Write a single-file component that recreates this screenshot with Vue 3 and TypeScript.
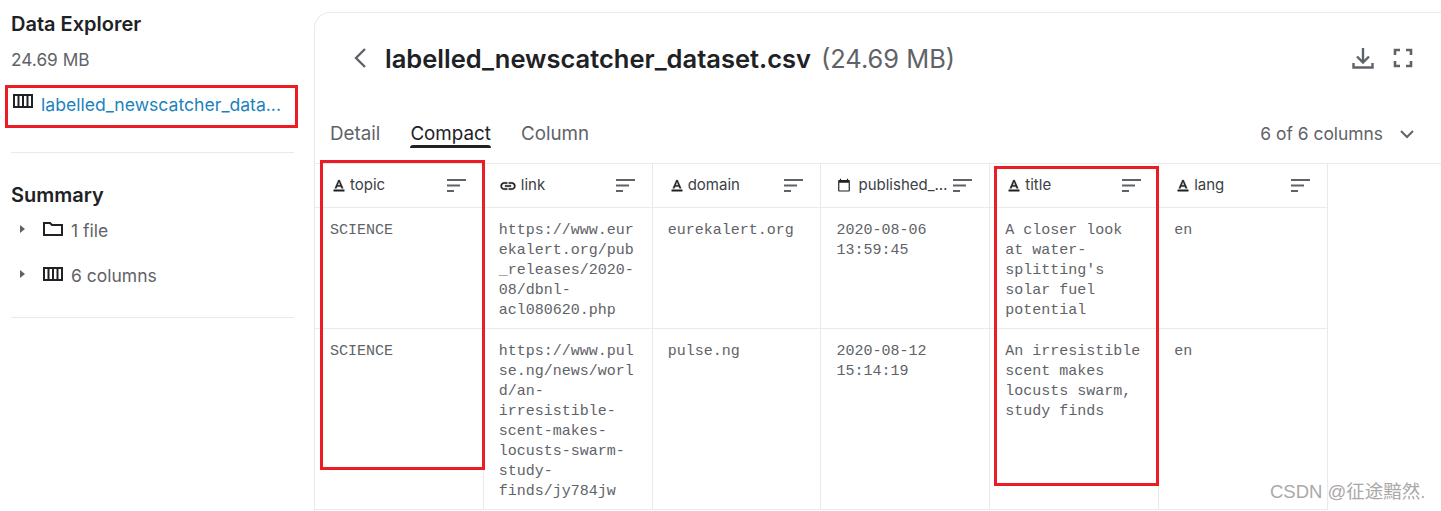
<script setup lang="ts">
interface Column {
  name: string
  icon: 'text' | 'link' | 'date'
}

const columns: Column[] = [
  { name: 'topic', icon: 'text' },
  { name: 'link', icon: 'link' },
  { name: 'domain', icon: 'text' },
  { name: 'published_date', icon: 'date' },
  { name: 'title', icon: 'text' },
  { name: 'lang', icon: 'text' }
]

const rows: string[][] = [
  [
    'SCIENCE',
    'https://www.eur\nekalert.org/pub\n_releases/2020-\n08/dbnl-\nacl080620.php',
    'eurekalert.org',
    '2020-08-06\n13:59:45',
    'A closer look\nat water-\nsplitting\'s\nsolar fuel\npotential',
    'en'
  ],
  [
    'SCIENCE',
    'https://www.pul\nse.ng/news/worl\nd/an-\nirresistible-\nscent-makes-\nlocusts-swarm-\nstudy-\nfinds/jy784jw',
    'pulse.ng',
    '2020-08-12\n15:14:19',
    'An irresistible\nscent makes\nlocusts swarm,\nstudy finds',
    'en'
  ]
]

const tabs = ['Detail', 'Compact', 'Column']
</script>

<template>
  <div class="page">
    <aside class="sidebar">
      <h2 class="side-title">Data Explorer</h2>
      <div class="side-size">24.69 MB</div>
      <div class="side-file">
        <svg class="cols-icon" width="20" height="16" viewBox="0 0 20 16">
          <path d="M1 2h18v12H1zM5.500 2v12M10 2v12M14.500 2v12" fill="none" stroke="#202124" stroke-width="2" />
        </svg>
        <span class="side-link">labelled_newscatcher_data...</span>
      </div>
      <hr class="side-rule" />
      <h2 class="side-title summary">Summary</h2>
      <div class="tree-row">
        <span class="tri"></span>
        <svg width="20" height="16" viewBox="0 0 20 16">
          <path d="M1 14V2h6l2 2h10v10z" fill="none" stroke="#202124" stroke-width="2" />
        </svg>
        <span>1 file</span>
      </div>
      <div class="tree-row second">
        <span class="tri"></span>
        <svg width="20" height="16" viewBox="0 0 20 16">
          <path d="M1 2h18v12H1zM5.500 2v12M10 2v12M14.500 2v12" fill="none" stroke="#202124" stroke-width="2" />
        </svg>
        <span>6 columns</span>
      </div>
      <hr class="side-rule lower" />
    </aside>

    <main class="panel">
      <header class="panel-head">
        <svg class="back" width="16" height="24" viewBox="0 0 16 24">
          <path d="M13 3 4 12l9 9" fill="none" stroke="#5f6368" stroke-width="2.400" />
        </svg>
        <h1 class="file-name">labelled_newscatcher_dataset.csv</h1>
        <span class="file-size">(24.69 MB)</span>
        <div class="head-actions">
          <svg width="24" height="24" viewBox="0 0 24 24">
            <path d="M12 2v14M6 10.500l6 6 6-6M2.500 17v4.500h19V17" fill="none" stroke="#5f6368" stroke-width="2.400" />
          </svg>
          <svg width="24" height="24" viewBox="0 0 24 24">
            <path d="M4 9V4h5M15 4h5v5M20 15v5h-5M9 20H4v-5" fill="none" stroke="#5f6368" stroke-width="2.600" />
          </svg>
        </div>
      </header>

      <nav class="tabs">
        <span v-for="tab in tabs" :key="tab" class="tab" :class="{ active: tab === 'Compact' }">{{ tab }}</span>
        <div class="col-count">
          <span>6 of 6 columns</span>
          <svg width="16" height="10" viewBox="0 0 16 10">
            <path d="m2 2 6 6 6-6" fill="none" stroke="#5f6368" stroke-width="2" />
          </svg>
        </div>
      </nav>

      <div class="table">
        <div v-for="col in columns" :key="col.name" class="th">
          <svg v-if="col.icon === 'text'" class="type-icon" width="18" height="18" viewBox="0 0 24 24">
            <path d="M5 17v2h14v-2H5zm4.500-4.200h5l.9 2.200h2.100L12.750 4h-1.500L6.500 15h2.100l.9-2.200zM12 5.980 13.870 11h-3.740L12 5.980z" fill="#202124" stroke="#202124" stroke-width=".6" />
          </svg>
          <svg v-else-if="col.icon === 'link'" class="type-icon link" width="18" height="18" viewBox="0 0 24 24">
            <path d="M3.900 12c0-1.710 1.390-3.100 3.100-3.100h4V7H7c-2.760 0-5 2.240-5 5s2.240 5 5 5h4v-1.900H7c-1.710 0-3.100-1.390-3.100-3.100zM8 13h8v-2H8v2zm9-6h-4v1.900h4c1.710 0 3.100 1.390 3.100 3.100s-1.390 3.100-3.100 3.100h-4V17h4c2.760 0 5-2.240 5-5s-2.240-5-5-5z" fill="#202124" stroke="#202124" stroke-width=".4" />
          </svg>
          <svg v-else class="type-icon date" width="14" height="16" viewBox="0 0 24 27">
            <path d="M20 3h-1V1h-2v2H7V1H5v2H4c-1.100 0-2 .9-2 2v16c0 1.100.9 2 2 2h16c1.100 0 2-.9 2-2V5c0-1.100-.9-2-2-2zm0 18H4V8h16v13z" fill="#202124" />
          </svg>
          <span class="th-name">{{ col.name }}</span>
          <svg class="sort-icon" width="19" height="13" viewBox="0 0 19 13">
            <path d="M0 0h19v2H0zM0 5.500h13v2H0zM0 11h7v2H0z" fill="#5f6368" />
          </svg>
        </div>
        <template v-for="(row, i) in rows" :key="i">
          <div v-for="(cell, j) in row" :key="j" class="td" :class="i === 0 ? 'first' : 'second'">{{ cell }}</div>
        </template>
      </div>
    </main>

    <div class="mark mark-file"></div>
    <div class="mark mark-topic"></div>
    <div class="mark mark-title"></div>
    <div class="watermark">CSDN @征途黯然.</div>
  </div>
</template>

<style>
html,
body {
  margin: 0;
  background: #fff;
  overflow: hidden;
}
</style>

<style scoped>
.page {
  position: relative;
  display: flex;
  width: 1441px;
  height: 511px;
  overflow: hidden;
  font-family: Inter, "Noto Sans", sans-serif;
  color: #5f6368;
  background: #fff;
}

.sidebar {
  flex: 0 0 314px;
  box-sizing: border-box;
  padding: 13px 20px 0 11px;
}

.side-title {
  margin: 0;
  font-size: 20px;
  line-height: 22px;
  font-weight: 600;
  color: #202124;
}

.side-size {
  margin-top: 13px;
  font-size: 17.300px;
  line-height: 24px;
}

.side-file {
  display: flex;
  align-items: flex-start;
  gap: 8px;
  margin-top: 20px;
  height: 60px;
  padding-left: 2px;
}

.cols-icon {
  margin-top: 1px;
}

.side-link {
  font-size: 17.600px;
  line-height: 24px;
  margin-top: 1px;
  color: #1a83bd;
}

.side-rule {
  margin: 0;
  border: 0;
  border-top: 1px solid #e8eaed;
  width: 283px;
}

.side-rule.lower {
  margin-top: 30px;
}

.summary {
  margin-top: 31px;
}

.tree-row {
  display: flex;
  align-items: center;
  height: 24px;
  margin-top: 12px;
  font-size: 17.500px;
  color: #5f6368;
}

.tree-row.second {
  margin-top: 21px;
}

.tree-row svg {
  margin: -3px 8px 0 18px;
}

.tri {
  width: 0;
  height: 0;
  margin: -3px 0 0 9px;
  border-top: 4.500px solid transparent;
  border-bottom: 4.500px solid transparent;
  border-left: 5px solid #5f6368;
}

.panel {
  flex: 1;
  margin-top: 12px;
  border-left: 1px solid #e8eaed;
  border-top: 1px solid #e8eaed;
  border-top-left-radius: 16px;
  min-width: 0;
}

.panel-head {
  display: flex;
  align-items: center;
  height: 92px;
  box-sizing: border-box;
  padding: 0 26px 2px 37px;
}

.back {
  margin: 0 17px 0 0;
}

.file-name {
  margin: 0;
  font-size: 25.500px;
  font-weight: 600;
  color: #202124;
}

.file-size {
  margin-left: 10px;
  font-size: 25.400px;
  color: #5f6368;
}

.head-actions {
  display: flex;
  gap: 16px;
  margin-left: auto;
}

.tabs {
  display: flex;
  align-items: flex-start;
  gap: 30px;
  height: 59px;
  box-sizing: border-box;
  padding: 16px 26px 0 15px;
  border-bottom: 1px solid #e8eaed;
}

.tab {
  position: relative;
  font-size: 18.800px;
  line-height: 26px;
  color: #5f6368;
}

.tab.active {
  color: #202124;
}

.tab.active::after {
  content: "";
  position: absolute;
  left: 0;
  right: 0;
  top: 24px;
  height: 3px;
  border-radius: 3px 3px 0 0;
  background: #202124;
}

.col-count {
  display: flex;
  align-items: center;
  gap: 16px;
  margin-left: auto;
  font-size: 17.400px;
  line-height: 26px;
}

.table {
  display: grid;
  grid-template-columns: repeat(6, 168.830px);
  color: #5f6368;
}

.th {
  display: flex;
  align-items: center;
  box-sizing: border-box;
  height: 44px;
  padding: 0 17px 0 15px;
  border-right: 1px solid #e8eaed;
  border-bottom: 1px solid #e8eaed;
}

.type-icon {
  flex: none;
  margin-right: 2px;
}

.type-icon.link {
  margin-right: 4px;
}

.type-icon.date {
  margin: 0 7px 0 1px;
}

.th-name {
  flex: 1;
  min-width: 0;
  overflow: hidden;
  white-space: nowrap;
  text-overflow: ellipsis;
  font-size: 15px;
  line-height: 20px;
  margin-top: -2px;
  color: #3c4043;
}

.sort-icon {
  flex: none;
  margin: -1px 0 0 5px;
}

.td {
  box-sizing: border-box;
  padding: 13px 8px 0 15px;
  border-right: 1px solid #e8eaed;
  border-bottom: 1px solid #e8eaed;
  font-family: "Liberation Mono", "DejaVu Sans Mono", monospace;
  font-size: 15px;
  line-height: 20px;
  white-space: pre-line;
}

.td.first {
  height: 121px;
}

.td.second {
  height: 181px;
}

.mark {
  position: absolute;
  box-sizing: border-box;
  border: 3px solid #ec1c24;
}

.mark-file {
  left: 5px;
  top: 85px;
  width: 293px;
  height: 43px;
}

.mark-topic {
  left: 320px;
  top: 160px;
  width: 165px;
  height: 310px;
}

.mark-title {
  left: 994px;
  top: 166px;
  width: 165px;
  height: 320px;
}

.watermark {
  position: absolute;
  left: 1270px;
  top: 480px;
  font-family: "Liberation Sans", "Noto Sans CJK SC", sans-serif;
  font-size: 18.500px;
  line-height: 24px;
  color: #a9a9a9;
  white-space: nowrap;
}
</style>
